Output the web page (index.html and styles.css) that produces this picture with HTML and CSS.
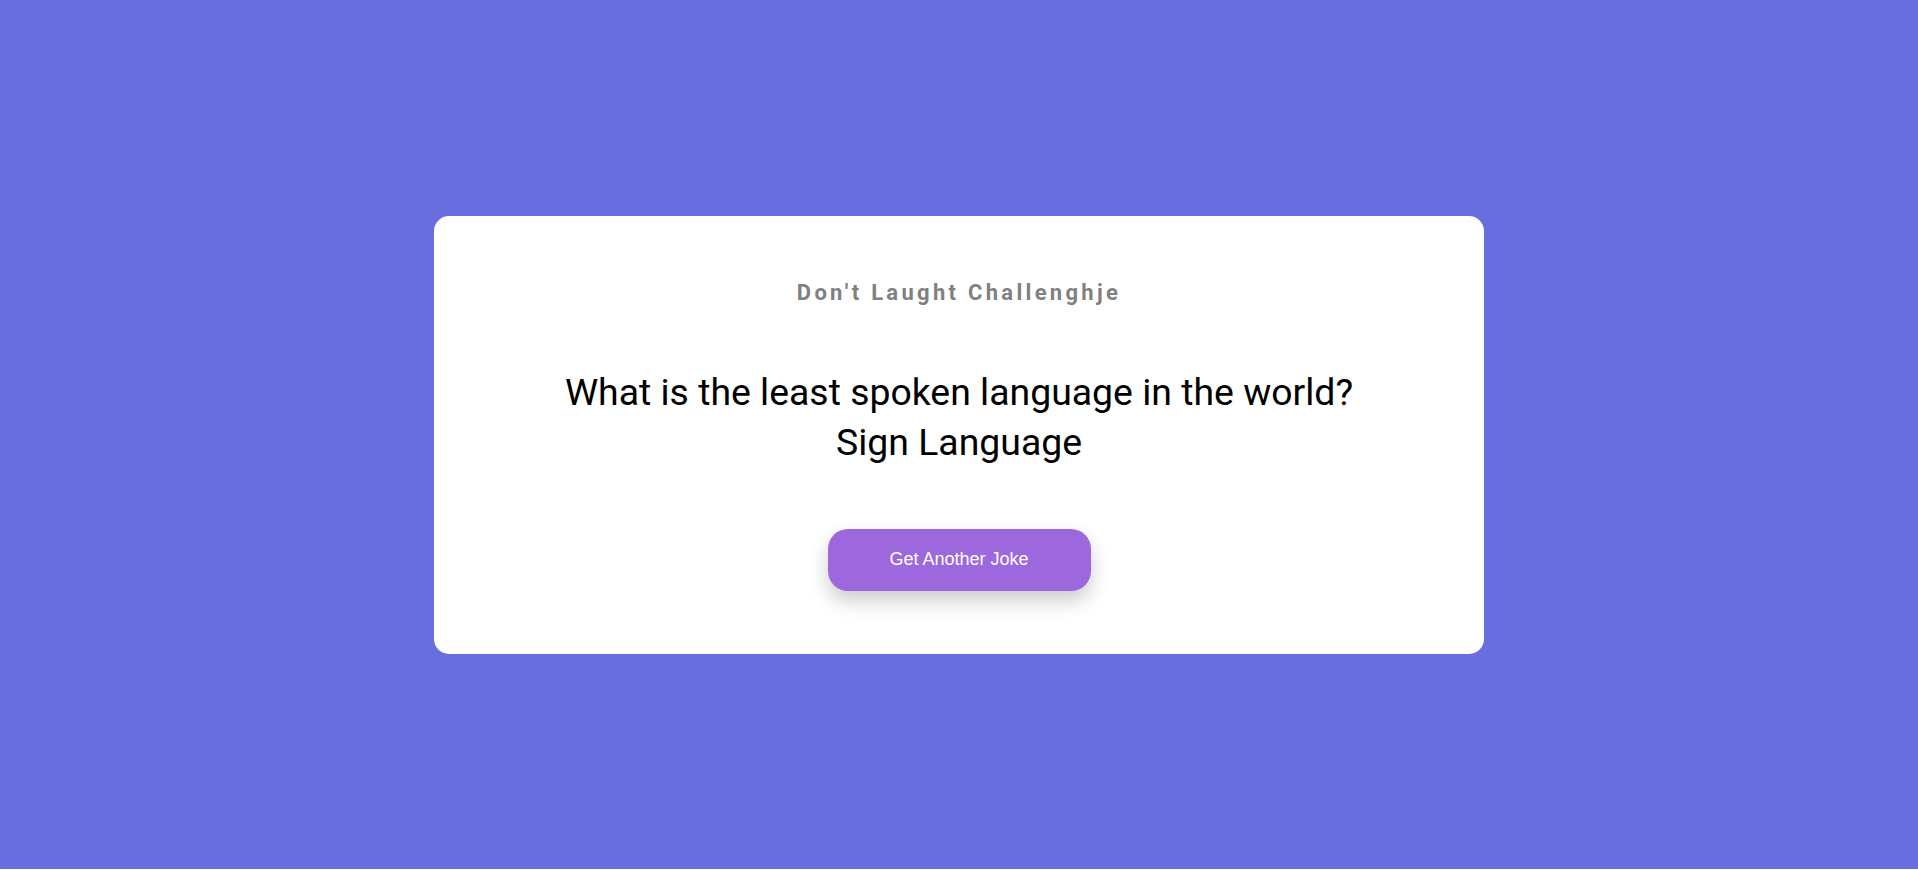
FILE: index.html
```html
<!DOCTYPE html>
<html lang="en">
<head>
<meta charset="UTF-8">
<title>Joke</title>
<link rel="stylesheet" href="styles.css">
</head>
<body>
<div class="page">
  <div class="card">
    <h3 class="title">Don't Laught Challenghje</h3>
    <div class="joke">What is the least spoken language in the world?<br>Sign Language</div>
    <button class="btn">Get Another Joke</button>
  </div>
</div>
</body>
</html>
```
FILE: styles.css
```css
* { box-sizing: border-box; }
html, body { margin: 0; padding: 0; background: #fff; }
.page {
  height: 869px;
  background: #686de0;
  display: flex;
  align-items: center;
  justify-content: center;
  font-family: Roboto, "Liberation Sans", sans-serif;
}
.card {
  width: 1050px;
  background: #fff;
  border-radius: 15px;
  padding: 64px 40px 63px;
  text-align: center;
  display: flex;
  flex-direction: column;
  align-items: center;
}
.title {
  margin: 0;
  font-size: 22px;
  font-weight: 700;
  letter-spacing: 3.3px;
  color: #808080;
}
.joke {
  margin: 62px 0 62px;
  font-size: 37.4px;
  line-height: 50px;
  color: #000;
}
.btn {
  font-family: "Liberation Sans", Arial, sans-serif;
  font-size: 18px;
  color: #fff;
  background: #9d68de;
  border: none;
  border-radius: 20px;
  padding: 20px 60px;
  width: 263px;
  height: 62px;
  box-shadow: 0 10px 20px rgba(0,0,0,0.2);
  cursor: pointer;
}
```
